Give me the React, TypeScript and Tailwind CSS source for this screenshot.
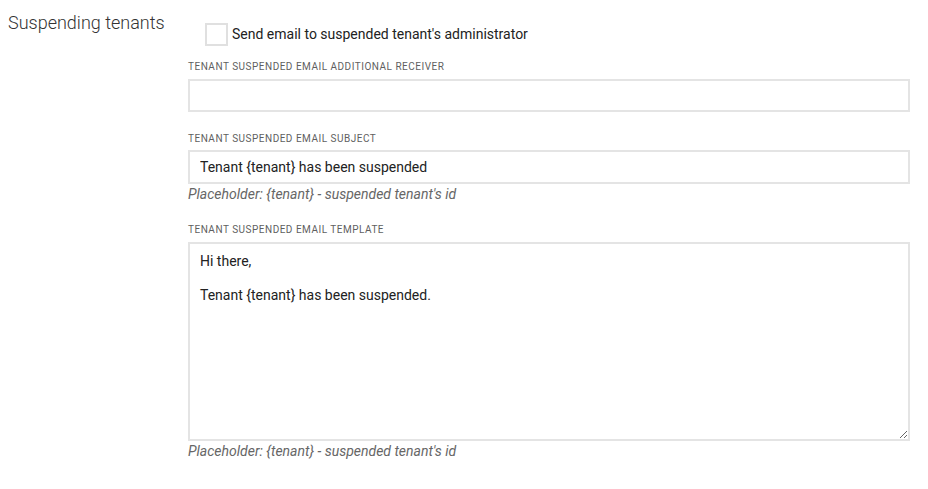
import { useState } from "react";

const labelCls =
  "block text-[10px] leading-[12px] tracking-[0.5px] uppercase text-[#5f5f5f]";
const boxCls =
  "block w-full border-2 border-[#e4e4e4] bg-white px-[10px] text-[14px] text-[#222] outline-none";
const hintCls = "text-[14px] leading-[20px] italic text-[#666]";

export default function App() {
  const [notify, setNotify] = useState(false);
  const [receiver, setReceiver] = useState("");
  const [subject, setSubject] = useState("Tenant {tenant} has been suspended");
  const [template, setTemplate] = useState(
    "Hi there,\n\nTenant {tenant} has been suspended."
  );

  return (
    <div
      className="flex min-h-screen bg-white"
      style={{ fontFamily: "Roboto, 'Liberation Sans', sans-serif" }}
    >
      {/* Section title */}
      <div className="w-[188px] shrink-0 pl-2 pt-[11px]">
        <h3 className="text-[18px] font-light leading-[24px] text-[#333]">
          Suspending tenants
        </h3>
      </div>

      {/* Fields */}
      <div className="flex-1 pr-[18px] pt-[23px]">
        <label className="ml-[17px] flex h-[23px] cursor-pointer items-center gap-[4px]">
          <input
            type="checkbox"
            checked={notify}
            onChange={(e) => setNotify(e.target.checked)}
            className="h-[23px] w-[23px] appearance-none border-2 border-[#e0e0e0] bg-white"
          />
          <span className="text-[14px] text-[#222]">
            Send email to suspended tenant's administrator
          </span>
        </label>

        <label className={`${labelCls} mt-[15px] mb-[6px]`}>
          Tenant suspended email additional receiver
        </label>
        <input
          value={receiver}
          onChange={(e) => setReceiver(e.target.value)}
          className={`${boxCls} h-[33px]`}
        />

        <label className={`${labelCls} mt-[21px] mb-[5px]`}>
          Tenant suspended email subject
        </label>
        <input
          value={subject}
          onChange={(e) => setSubject(e.target.value)}
          className={`${boxCls} h-[34px]`}
        />
        <p className={hintCls}>Placeholder: {"{tenant}"} - suspended tenant's id</p>

        <label className={`${labelCls} mt-[20px] mb-[6px]`}>
          Tenant suspended email template
        </label>
        <textarea
          value={template}
          onChange={(e) => setTemplate(e.target.value)}
          className={`${boxCls} h-[199px] resize-y pt-[9px] leading-[17px]`}
        />
        <p className={hintCls}>Placeholder: {"{tenant}"} - suspended tenant's id</p>
      </div>
    </div>
  );
}
